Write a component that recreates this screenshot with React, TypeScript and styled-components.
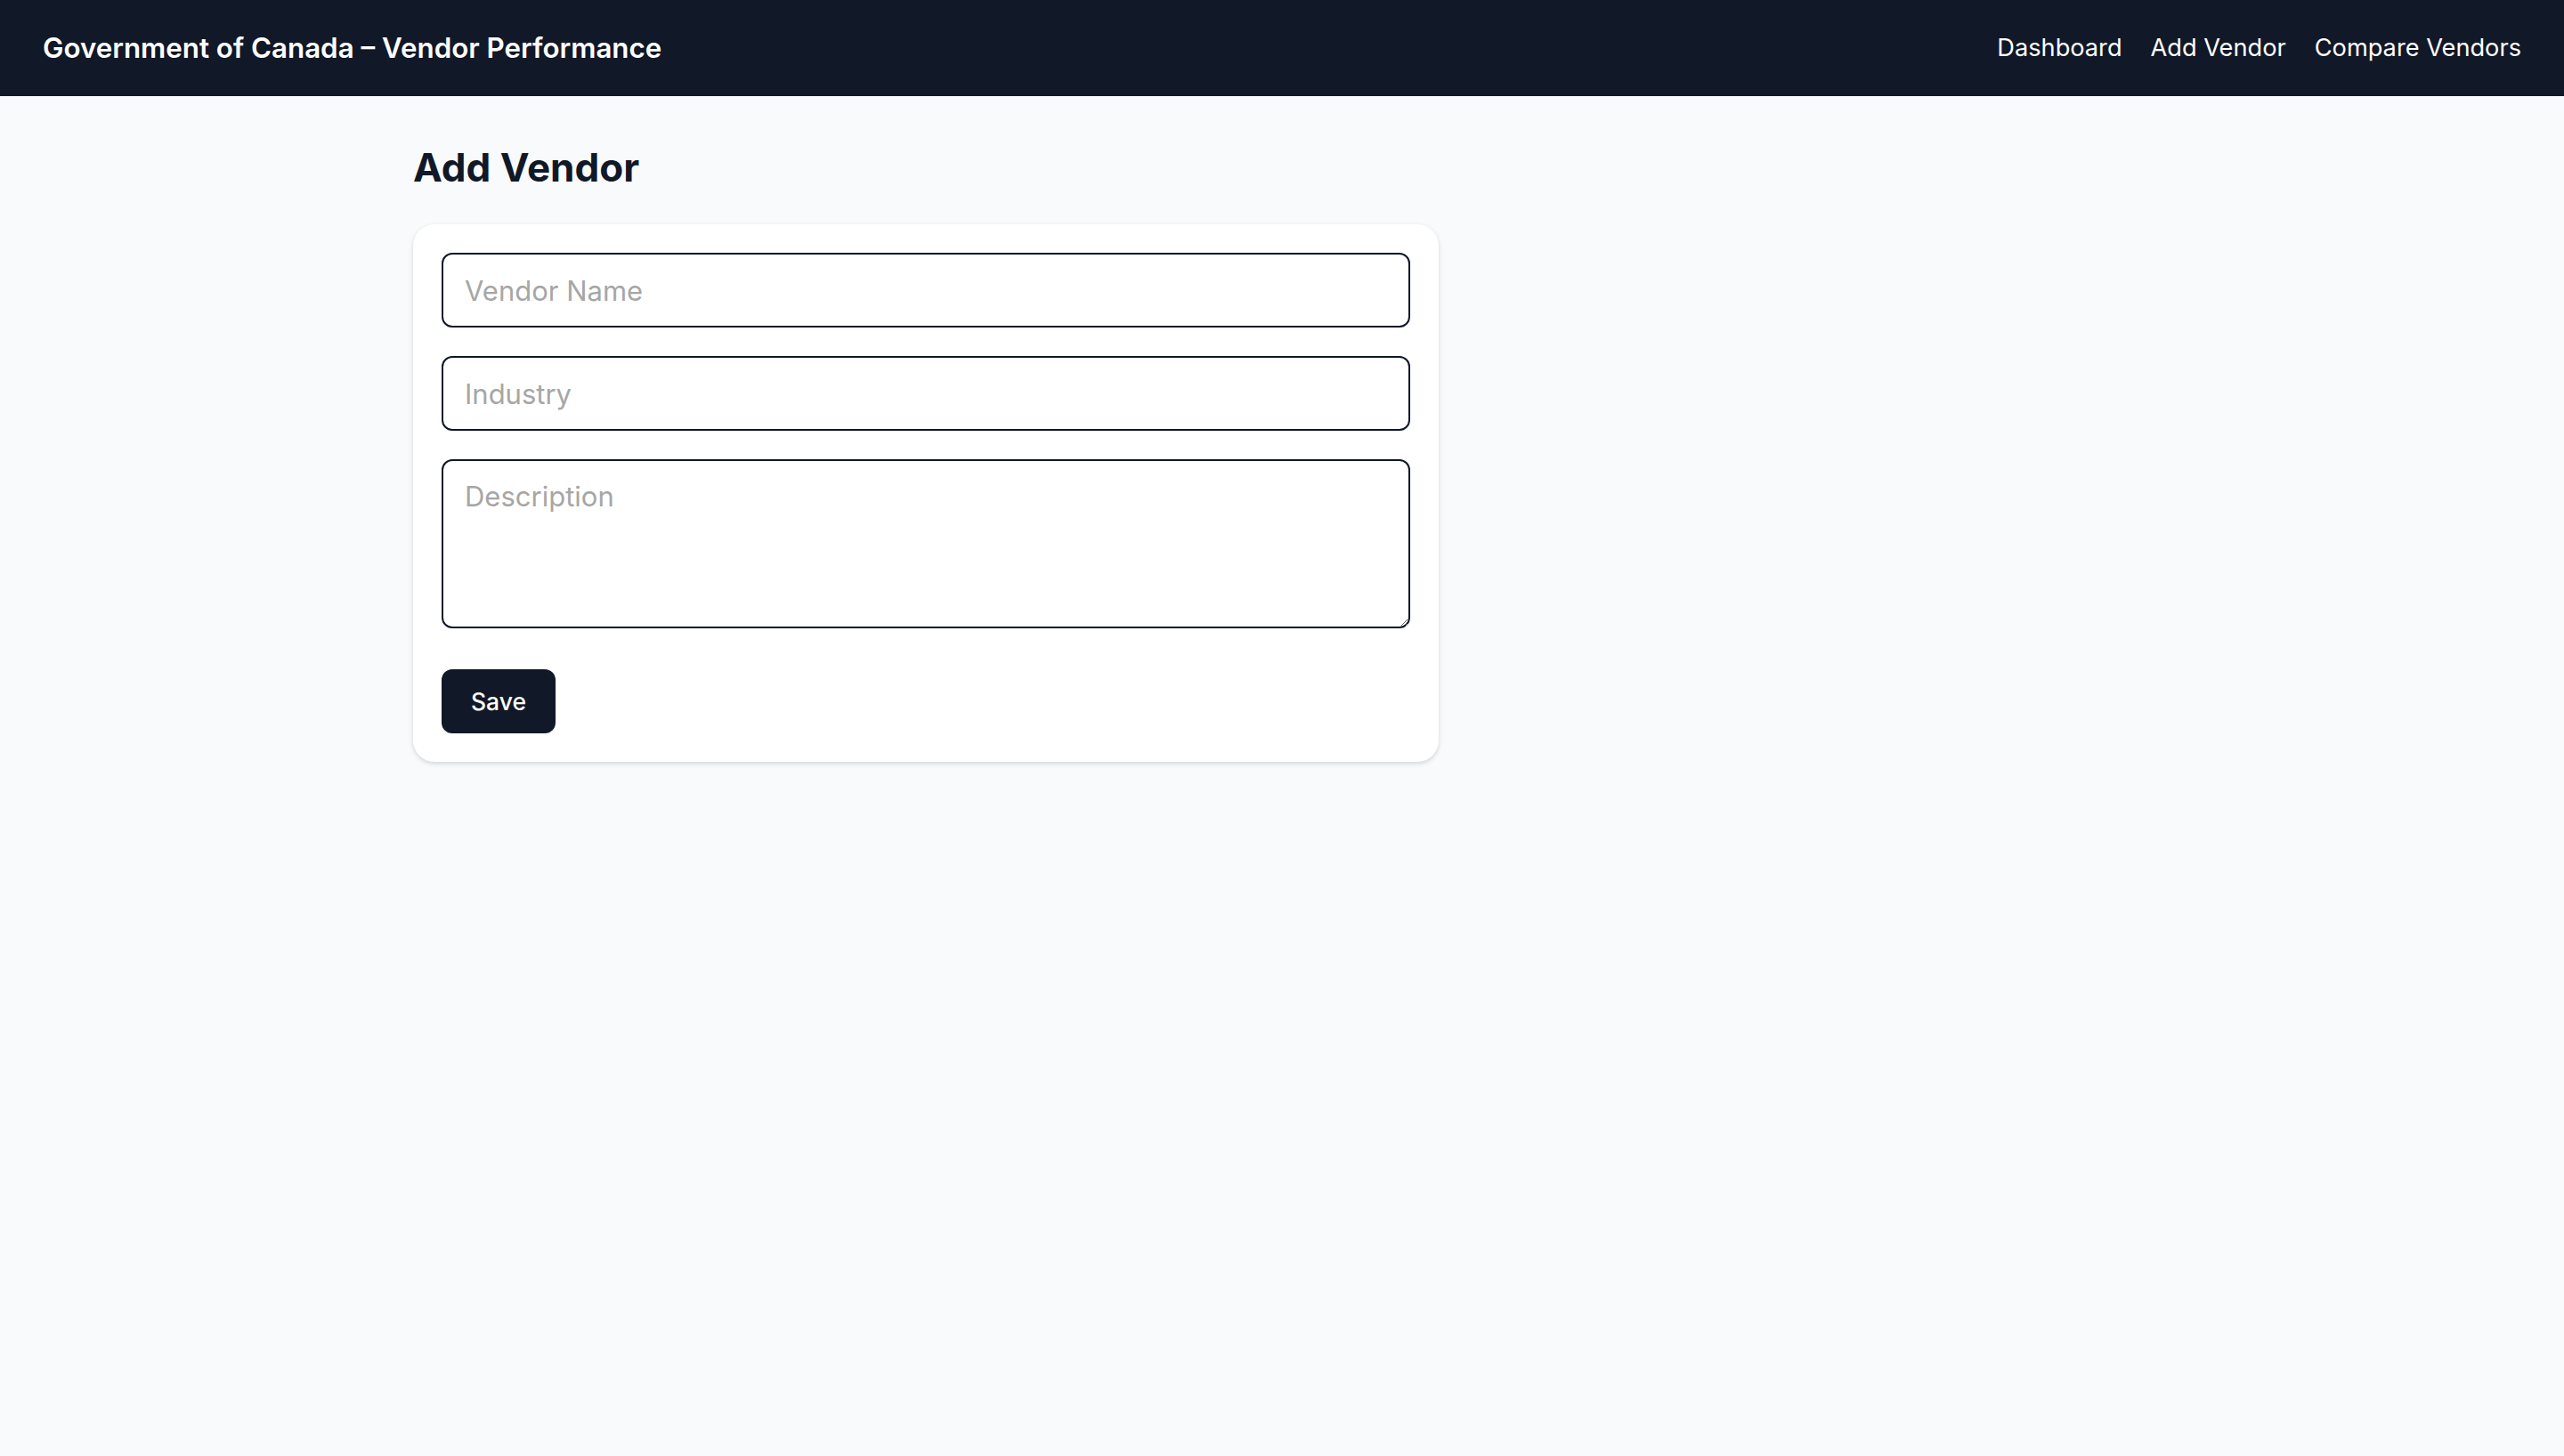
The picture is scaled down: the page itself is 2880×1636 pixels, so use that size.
import styled, { createGlobalStyle } from "styled-components";

// page is photographed at 1x on a 2880px wide window, so sizes are doubled
const GlobalStyle = createGlobalStyle`
  * {
    box-sizing: border-box;
  }
  body {
    margin: 0;
    background: #f9fafb;
    font-family: Inter, "Noto Sans", "Liberation Sans", sans-serif;
    color: #111827;
  }
`;

const links = ["Dashboard", "Add Vendor", "Compare Vendors"];

export default function App() {
  return (
    <>
      <GlobalStyle />
      <NavBar>
        <Brand>Government of Canada – Vendor Performance</Brand>
        <NavLinks>
          {links.map((l) => (
            <NavLink key={l} href="#">
              {l}
            </NavLink>
          ))}
        </NavLinks>
      </NavBar>
      <Main>
        <PageTitle>Add Vendor</PageTitle>
        <Card>
          <Form onSubmit={(e) => e.preventDefault()}>
            <TextInput placeholder="Vendor Name" />
            <TextInput placeholder="Industry" />
            <TextArea placeholder="Description" />
            <SaveButton type="submit">Save</SaveButton>
          </Form>
        </Card>
      </Main>
    </>
  );
}

const NavBar = styled.nav`
  display: flex;
  justify-content: space-between;
  align-items: center;
  height: 108px;
  padding: 0 48px;
  background: #111827;
  color: #fff;
`;

const Brand = styled.div`
  font-size: 31.3px;
  font-weight: 600;
  line-height: 48px;
`;

const NavLinks = styled.div`
  display: flex;
  align-items: center;
  gap: 32px;
`;

const NavLink = styled.a`
  color: #fff;
  text-decoration: none;
  font-size: 27.2px;
  line-height: 40px;
`;

const Main = styled.main`
  max-width: 2048px;
  margin: 0 auto;
  padding: 48px;
`;

const PageTitle = styled.h1`
  margin: 0 0 32px;
  font-size: 44px;
  line-height: 64px;
  font-weight: 700;
  color: #111827;
`;

const Card = styled.div`
  max-width: 1152px;
  background: #fff;
  border-radius: 24px;
  padding: 32px;
  box-shadow: 0 2px 6px rgba(0, 0, 0, 0.1), 0 2px 4px rgba(0, 0, 0, 0.06);
`;

const Form = styled.form`
  display: flex;
  flex-direction: column;
  gap: 32px;
`;

const TextInput = styled.input`
  display: block;
  width: 100%;
  height: 84px;
  padding: 16px 24px;
  border: 2px solid #0f172a;
  border-radius: 12px;
  font-family: inherit;
  font-size: 31px;
  line-height: 48px;
  color: #111827;
  background: #fff;
  outline: none;

  &::placeholder {
    color: #a6a6a6;
  }
`;

const TextArea = styled.textarea`
  display: block;
  width: 100%;
  height: 190px;
  margin-bottom: 14px;
  padding: 16px 24px;
  border: 2px solid #0f172a;
  border-radius: 12px;
  font-family: inherit;
  font-size: 31px;
  line-height: 48px;
  color: #111827;
  background: #fff;
  outline: none;

  &::placeholder {
    color: #a6a6a6;
  }
`;

const SaveButton = styled.button`
  align-self: flex-start;
  padding: 16px 33px;
  border: none;
  border-radius: 12px;
  background: #111827;
  color: #fff;
  font-family: inherit;
  font-size: 26.5px;
  line-height: 40px;
  font-weight: 500;
  cursor: pointer;
`;
